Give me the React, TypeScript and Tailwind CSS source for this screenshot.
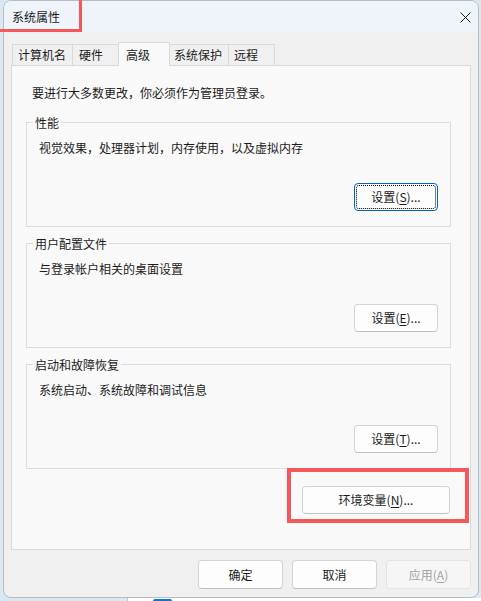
const tabs = [
  { label: "计算机名", w: "w-[61px]", pl: "pl-[5px]" },
  { label: "硬件", w: "w-[47px]", pl: "pl-[6px]" },
  { label: "高级", w: "w-[52px]", pl: "pl-[7px]", active: true },
  { label: "系统保护", w: "w-[60px]", pl: "pl-[4px]" },
  { label: "远程", w: "w-[47px]", pl: "pl-[5px]" },
];

const groups = [
  { title: "性能", text: "视觉效果，处理器计划，内存使用，以及虚拟内存", key: "S", focused: true },
  { title: "用户配置文件", text: "与登录帐户相关的桌面设置", key: "E" },
  { title: "启动和故障恢复", text: "系统启动、系统故障和调试信息", key: "T" },
];

function Button({
  children,
  className = "",
  focused = false,
  disabled = false,
}: {
  children: React.ReactNode;
  className?: string;
  focused?: boolean;
  disabled?: boolean;
}) {
  const look = disabled
    ? "border-[#e3e3e3] bg-[#f6f6f6] text-[#a3a3a3]"
    : focused
      ? "border-[#0067c0] bg-[#fdfdfd] text-[#1b1b1b]"
      : "border-[#d3d3d3] border-b-[#c0c0c0] bg-[#fdfdfd] text-[#1b1b1b]";
  return (
    <div className={`relative flex items-center justify-center rounded-[4px] border ${look} ${className}`}>
      {focused && <div className="absolute inset-[1px] rounded-[3px] border border-dotted border-black" />}
      <span>{children}</span>
    </div>
  );
}

export default function App() {
  return (
    <div className="relative h-[601px] w-[481px] overflow-hidden bg-[#dbe8f2] font-['Noto_Sans_CJK_SC',sans-serif] text-[12px] leading-[16px] text-[#1b1b1b]">
      <div className="ml-[3px] flex h-[598px] w-[476px] flex-col overflow-hidden rounded-[8px] border border-[#b8bdc2] bg-[#f0f0f0]">
        {/* title bar */}
        <div className="flex h-[31px] items-center justify-between bg-[#eef4f9] pl-[8px] pr-[7px]">
          <span>系统属性</span>
          <svg width="11" height="11" viewBox="0 0 11 11" className="mt-[1px]">
            <path d="M0.5 0.5 L10.5 10.5 M10.5 0.5 L0.5 10.5" stroke="#1b1b1b" strokeWidth="1" />
          </svg>
        </div>

        <div className="flex flex-1 flex-col px-[7px] pt-[10px]">
          {/* tabs */}
          <div className="ml-[1px] flex h-[23px] items-end">
            {tabs.map((t, i) => (
              <div
                key={t.label}
                className={`flex items-center border border-b-0 border-[#d9d9d9] ${t.w} ${t.pl} ${
                  i > 0 ? "-ml-px" : ""
                } ${t.active ? "relative z-10 -mb-px h-[24px] bg-[#f9f9f9]" : "h-[21px] bg-[#f0f0f0]"}`}
              >
                {t.label}
              </div>
            ))}
          </div>

          {/* panel */}
          <div className="flex h-[485px] w-[460px] flex-col border border-[#d9d9d9] bg-[#f9f9f9] pt-[19px]">
            <p className="pl-[20px]">要进行大多数更改，你必须作为管理员登录。</p>

            <div className="mt-[5px] flex flex-col">
              {groups.map((g) => (
                <div
                  key={g.title}
                  className="relative ml-[14px] mt-[16px] flex w-[425px] flex-col border border-[#dcdcdc] px-[12px] pb-[15px] pt-[17px]"
                >
                  <span className="absolute -top-[8px] left-[6px] bg-[#f9f9f9] px-[2px]">{g.title}</span>
                  <p>{g.text}</p>
                  <Button focused={g.focused} className="mt-[27px] h-[28px] w-[84px] self-end">
                    设置(<u className="underline-offset-2">{g.key}</u>)...
                  </Button>
                </div>
              ))}
            </div>

            <Button className="mr-[20px] mt-[17px] h-[28px] w-[148px] self-end">
              环境变量(<u className="underline-offset-2">N</u>)...
            </Button>
          </div>

          {/* dialog buttons */}
          <div className="mt-[10px] ml-[187px] flex gap-[9px]">
            <Button className="h-[29px] w-[86px]">确定</Button>
            <Button className="h-[29px] w-[86px]">取消</Button>
            <Button disabled className="h-[29px] w-[86px]">
              应用(<u className="underline-offset-2">A</u>)
            </Button>
          </div>
        </div>
      </div>

      {/* window behind, peeking out below */}
      <div className="ml-[127px] flex h-[10px] items-start gap-[15px] border-l border-[#c6c6c6] bg-white pl-[25px]">
        <div className="mt-[1px] h-[12px] w-[19px] rounded-[2px] bg-[#1a73c9]" />
        <span className="mt-[1px] text-[14px] leading-[18px]">Windows 更新</span>
      </div>

      {/* annotation boxes */}
      <div className="absolute -left-[10px] -top-[10px] h-[42px] w-[92px] border-[3px] border-[#f4585b]" />
      <div className="absolute left-[287px] top-[468px] h-[55px] w-[182px] border-[4px] border-[#f4585b]" />
    </div>
  );
}
